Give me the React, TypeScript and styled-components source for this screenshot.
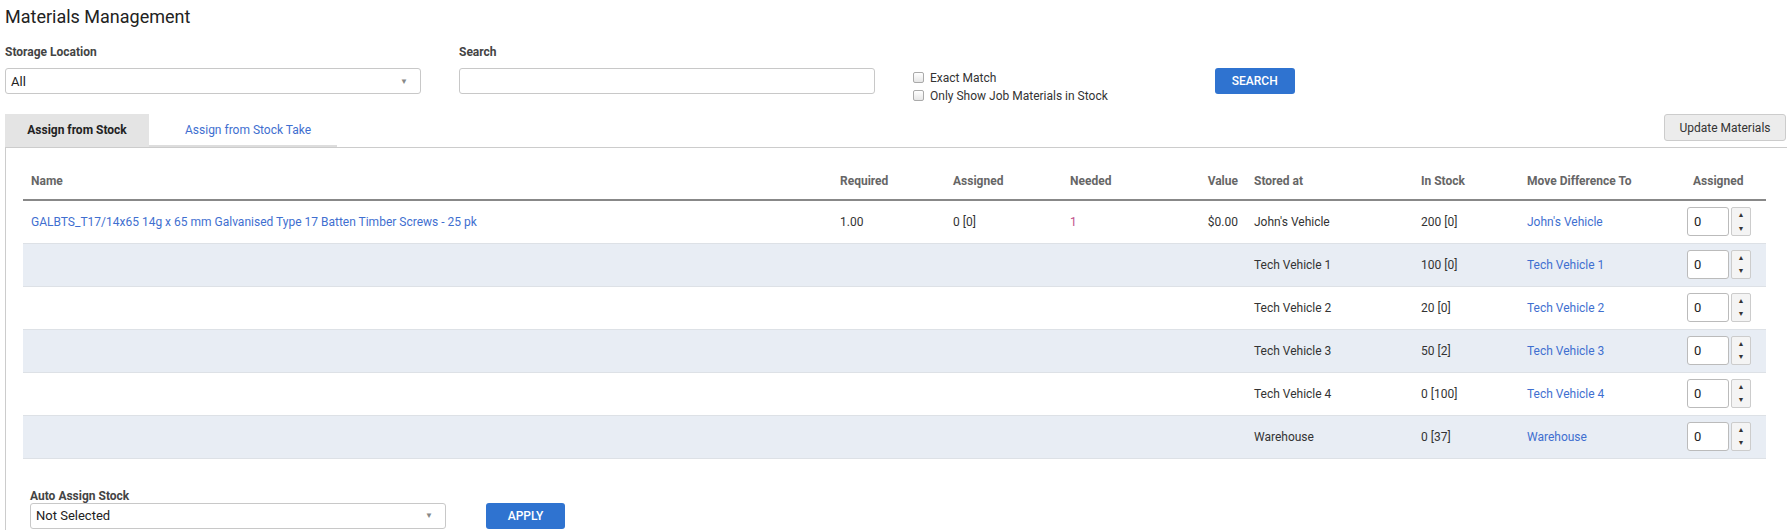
import React from "react";
import styled, { createGlobalStyle } from "styled-components";

const Global = createGlobalStyle`
  body { margin: 0; font-family: Roboto, "Liberation Sans", sans-serif; color: #333; background: #fff; font-size: 12px; }
  * { box-sizing: border-box; }
`;

const Page = styled.div`padding: 6px 0 0 5px; width: 1787px;`;
const Title = styled.h1`font-size: 18px; font-weight: 400; margin: 0 0 18px 0; color: #222;`;
const FilterRow = styled.div`display: flex; align-items: flex-start;`;
const Field = styled.div<{ w: number; ml?: number }>`width: ${p => p.w}px; margin-left: ${p => p.ml || 0}px; display: flex; flex-direction: column;`;
const Label = styled.label`font-size: 12px; font-weight: 700; color: #444; height: 23px;`;
const SelectBox = styled.div`height: 26px; border: 1px solid #c8c8c8; border-radius: 3px; display: flex; align-items: center; justify-content: space-between; padding: 0 12px 0 5px; font-size: 13px; color: #222; background: #fff;`;
const Caret = styled.span`font-size: 8px; color: #888;`;
const Input = styled.div`height: 26px; border: 1px solid #c8c8c8; border-radius: 3px;`;
const Checks = styled.div`margin-left: 38px; margin-top: 25px; display: flex; flex-direction: column; gap: 3px;`;
const Check = styled.div`display: flex; align-items: center; gap: 6px; font-size: 12px; color: #333; height: 15px;`;
const Box = styled.span`width: 11px; height: 11px; border: 1px solid #aaa; border-radius: 2px; background: linear-gradient(#fff, #e6e6e6);`;
const Primary = styled.button<{ w: number }>`width: ${p => p.w}px; height: 26px; background: #2f73d0; color: #fff; border: none; border-radius: 3px; font-family: inherit; font-size: 12px; font-weight: 500;`;
const TabBar = styled.div`display: flex; align-items: flex-end; margin-top: 11px; padding-right: 1px;`;
const Tab = styled.div<{ active?: boolean; w: number }>`width: ${p => p.w}px; height: 33px; display: flex; align-items: center; justify-content: ${p => p.active ? "center" : "flex-start"}; padding-left: ${p => p.active ? 0 : 36}px; font-size: 12px; font-weight: ${p => p.active ? 700 : 400}; color: ${p => p.active ? "#222" : "#3f6fd0"}; background: ${p => p.active ? "#e4e4e4" : "transparent"}; border-bottom: 2px solid ${p => p.active ? "#e4e4e4" : "#ddd"};`;
const TabSpacer = styled.div`flex: 1;`;
const UpdateBtn = styled.button`width: 122px; height: 27px; margin-bottom: 6px; background: #ececec; border: 1px solid #ccc; border-radius: 3px; font-family: inherit; font-size: 12px; color: #333;`;
const Panel = styled.div`border: 1px solid #ccc; border-right: none; padding: 26px 21px 0 17px; height: 393px;`;
const Table = styled.table`border-collapse: collapse; table-layout: fixed; width: 1743px;`;
const Th = styled.th<{ w: number; right?: boolean }>`width: ${p => p.w}px; text-align: ${p => p.right ? "right" : "left"}; font-size: 12px; font-weight: 700; color: #666; padding: 0 8px 11px; border-bottom: 2px solid #888;`;
const Tr = styled.tr<{ alt?: boolean }>`background: ${p => p.alt ? "#e8edf4" : "#fff"}; height: 43px; border-bottom: 1px solid #dde1e6;`;
const Td = styled.td<{ right?: boolean; tone?: string }>`padding: 0 8px; font-size: 12px; color: ${p => p.tone || "#333"}; text-align: ${p => p.right ? "right" : "left"}; white-space: nowrap;`;
const Spin = styled.div`display: flex; align-items: center; gap: 2px; margin-left: -6px;`;
const SpinBox = styled.div`width: 42px; height: 29px; border: 1px solid #bbb; border-radius: 3px; background: #fff; display: flex; align-items: center; padding-left: 6px; font-size: 13px; color: #222;`;
const Arrows = styled.div`display: flex; flex-direction: column; width: 20px; height: 29px; border: 1px solid #ccc; border-radius: 2px; background: #f4f4f4; font-size: 7px; color: #333; align-items: center; justify-content: space-around;`;
const Auto = styled.div`margin-top: 30px; padding-left: 7px;`;
const AutoRow = styled.div`display: flex; align-items: center; gap: 40px;`;

const rows = [
  ["John's Vehicle", "200 [0]"],
  ["Tech Vehicle 1", "100 [0]"],
  ["Tech Vehicle 2", "20 [0]"],
  ["Tech Vehicle 3", "50 [2]"],
  ["Tech Vehicle 4", "0 [100]"],
  ["Warehouse", "0 [37]"],
];
const link = "#3f6fd0";

export default function App() {
  return (
    <Page>
      <Global />
      <Title>Materials Management</Title>
      <FilterRow>
        <Field w={416}><Label>Storage Location</Label><SelectBox>All<Caret>▼</Caret></SelectBox></Field>
        <Field w={416} ml={38}><Label>Search</Label><Input /></Field>
        <Checks>
          <Check><Box />Exact Match</Check>
          <Check><Box />Only Show Job Materials in Stock</Check>
        </Checks>
        <div style={{ marginLeft: 107, marginTop: 23 }}><Primary w={80}>SEARCH</Primary></div>
      </FilterRow>
      <TabBar>
        <Tab active w={144}>Assign from Stock</Tab>
        <Tab w={188}>Assign from Stock Take</Tab>
        <TabSpacer />
        <UpdateBtn>Update Materials</UpdateBtn>
      </TabBar>
      <Panel>
        <Table>
          <thead>
            <tr>
              <Th w={809}>Name</Th><Th w={113}>Required</Th><Th w={117}>Assigned</Th><Th w={98}>Needed</Th>
              <Th w={86} right>Value</Th><Th w={167}>Stored at</Th><Th w={106}>In Stock</Th><Th w={166}>Move Difference To</Th><Th w={81}>Assigned</Th>
            </tr>
          </thead>
          <tbody>
            {rows.map(([loc, stock], i) => (
              <Tr key={loc} alt={i % 2 === 1}>
                <Td tone={link}>{i === 0 ? "GALBTS_T17/14x65 14g x 65 mm Galvanised Type 17 Batten Timber Screws - 25 pk" : ""}</Td>
                <Td>{i === 0 ? "1.00" : ""}</Td>
                <Td>{i === 0 ? "0 [0]" : ""}</Td>
                <Td tone="#c0508a">{i === 0 ? "1" : ""}</Td>
                <Td right>{i === 0 ? "$0.00" : ""}</Td>
                <Td>{loc}</Td>
                <Td>{stock}</Td>
                <Td tone={link}>{loc}</Td>
                <Td><Spin><SpinBox>0</SpinBox><Arrows><span>▲</span><span>▼</span></Arrows></Spin></Td>
              </Tr>
            ))}
          </tbody>
        </Table>
        <Auto>
          <Label>Auto Assign Stock</Label>
          <AutoRow>
            <Field w={416}><SelectBox>Not Selected<Caret>▼</Caret></SelectBox></Field>
            <Primary w={79}>APPLY</Primary>
          </AutoRow>
        </Auto>
      </Panel>
    </Page>
  );
}
